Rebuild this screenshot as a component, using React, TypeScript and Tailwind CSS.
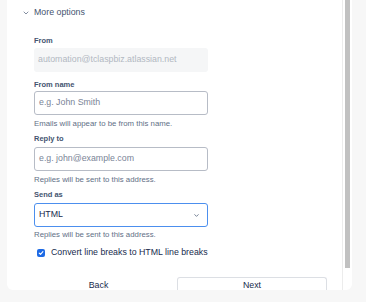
import { ChevronDown } from "lucide-react";

const FONT = { fontFamily: '"Liberation Sans", Arial, sans-serif' };

const Label = ({ children, className = "" }: { children: string; className?: string }) => (
  <p className={`text-[7.5px] leading-[10px] font-bold text-[#44546f] ${className}`}>{children}</p>
);

const Helper = ({ children, className = "" }: { children: string; className?: string }) => (
  <p className={`text-[7.8px] leading-[10px] text-[#626f86] ${className}`}>{children}</p>
);

const Field = ({ placeholder, className = "" }: { placeholder: string; className?: string }) => (
  <div
    className={`flex h-[24px] w-[174px] items-center rounded-[3px] border border-[#b7bcc6] bg-white px-[4px] text-[8.8px] text-[#7a8497] ${className}`}
  >
    {placeholder}
  </div>
);

export default function App() {
  return (
    <div className="h-[302px] w-[366px] overflow-hidden bg-[#f7f7f7]" style={FONT}>
      <div className="ml-[7px] flex h-[290px] w-[345px] overflow-hidden rounded-b-[6px] bg-white">
        <div className="flex-1 overflow-hidden pl-[15px]">
          <div className="mt-[6px] flex h-[14px] items-center gap-[4px] text-[8.8px] text-[#44546f]">
            <ChevronDown size={8} strokeWidth={2} className="text-[#44546f]" />
            <span>More options</span>
          </div>

          <div className="pl-[12px]">
            <Label className="mt-[16px]">From</Label>
            <div className="mt-[2px] flex h-[24px] w-[174px] items-center rounded-[3px] bg-[#f5f6f7] px-[4px] text-[8.8px] text-[#b2b8c2]">
              automation@tclaspbiz.atlassian.net
            </div>

            <Label className="mt-[8px]">From name</Label>
            <Field placeholder="e.g. John Smith" className="mt-[1px]" />
            <Helper className="mt-[4px]">Emails will appear to be from this name.</Helper>

            <Label className="mt-[5px]">Reply to</Label>
            <Field placeholder="e.g. john@example.com" className="mt-[3px]" />
            <Helper className="mt-[4px]">Replies will be sent to this address.</Helper>

            <Label className="mt-[5px]">Send as</Label>
            <div className="mt-[3px] flex h-[24px] w-[174px] items-center justify-between rounded-[3px] border border-[#4c8fee] bg-white pl-[4px] pr-[7px] text-[8.8px] text-[#172b4d]">
              <span>HTML</span>
              <ChevronDown size={7} strokeWidth={2.5} className="text-[#44546f]" />
            </div>
            <Helper className="mt-[3px]">Replies will be sent to this address.</Helper>

            <label className="mt-[6px] flex h-[14px] items-center gap-[6px] pl-[3px] text-[8.8px] text-[#172b4d]">
              <span className="flex h-[8px] w-[8px] items-center justify-center rounded-[2px] bg-[#1d6ae5]">
                <svg width="6" height="6" viewBox="0 0 10 10" fill="none">
                  <path d="M2 5.2 L4.2 7.4 L8.2 2.8" stroke="white" strokeWidth="1.8" strokeLinecap="round" strokeLinejoin="round" />
                </svg>
              </span>
              Convert line breaks to HTML line breaks
            </label>
          </div>

          <div className="mt-[17px] flex gap-[2px]">
            <button className="flex h-[13px] w-[153px] items-end justify-center text-[8.8px] leading-[9px] text-[#172b4d]">
              Back
            </button>
            <button className="flex h-[13px] w-[150px] items-end justify-center rounded-t-[3px] border border-b-0 border-[#dcdfe4] bg-white text-[8.8px] leading-[9px] text-[#172b4d]">
              Next
            </button>
          </div>
        </div>

        <div className="h-full w-[10px] border-l border-[#ececec] pl-[2px]">
          <div className="h-[268px] w-[5px] bg-[#c1c1c1]" />
        </div>
      </div>
    </div>
  );
}
